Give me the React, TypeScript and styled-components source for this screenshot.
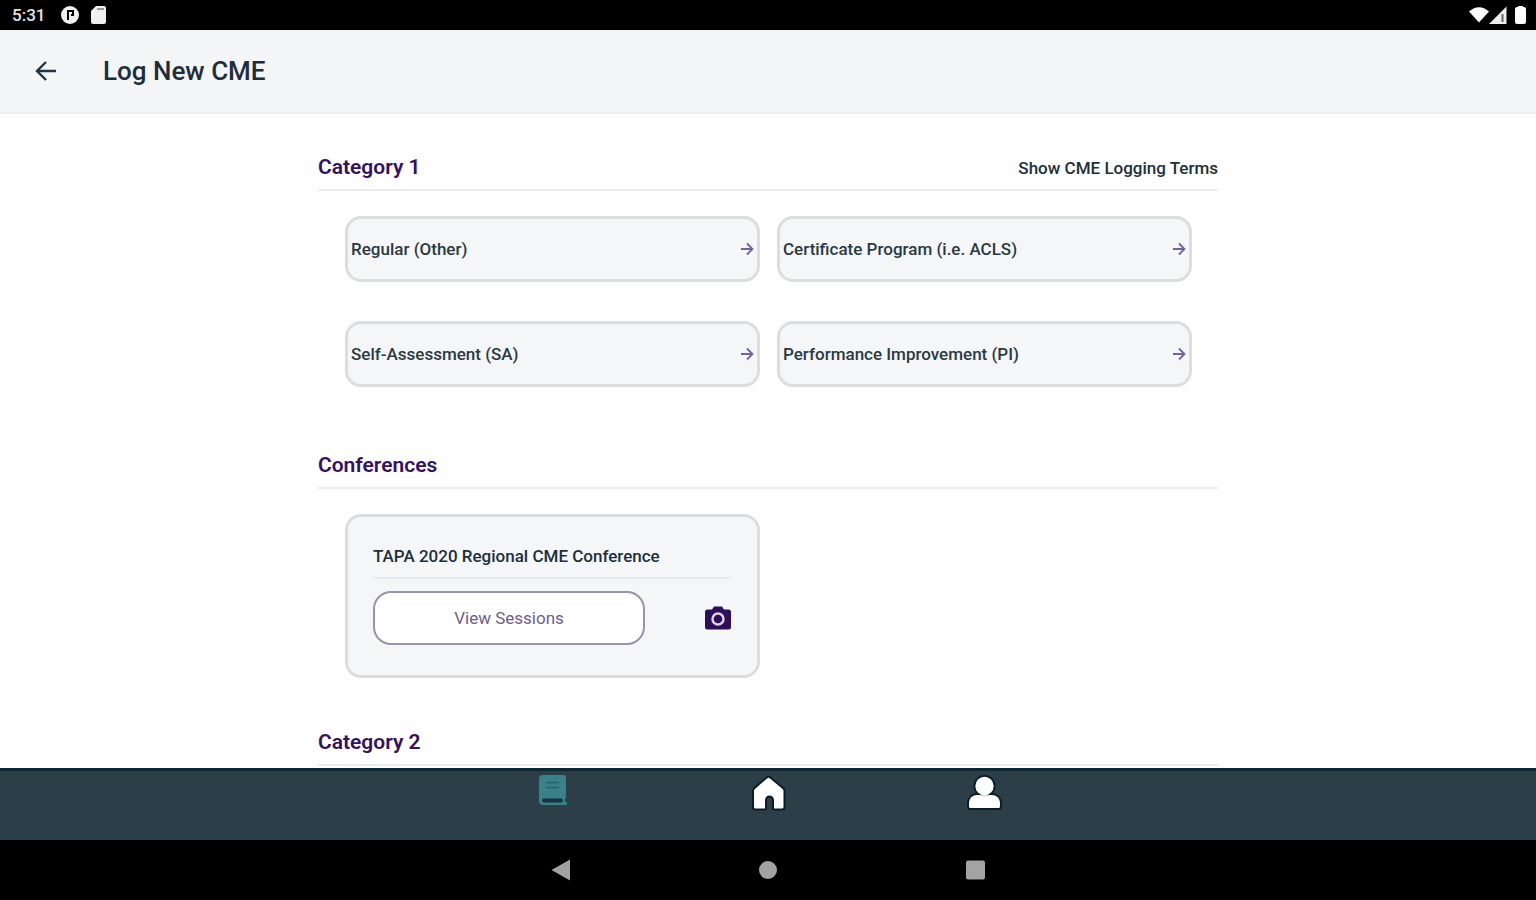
import React from "react";
import styled, { createGlobalStyle } from "styled-components";

const GlobalStyle = createGlobalStyle`
  *, *::before, *::after { box-sizing: border-box; }
  body {
    margin: 0;
    background: #fefefe;
    color: #1f333d;
    font-family: Roboto, "Liberation Sans", sans-serif;
  }
  button { font: inherit; color: inherit; cursor: pointer; }
  svg { display: block; flex: none; }
`;

const Screen = styled.div`
  display: flex;
  flex-direction: column;
  height: 100vh;
`;

const StatusBar = styled.div`
  display: flex;
  align-items: center;
  justify-content: space-between;
  flex: none;
  height: 30px;
  padding: 0 8px 0 12px;
  background: #000;
  color: #e4e4e4;
`;

const StatusGroup = styled.div`
  display: flex;
  align-items: center;
  gap: 12px;
`;

const Clock = styled.time`
  margin-right: 4px;
  font-size: 17px;
  font-weight: 500;
  line-height: 20px;
`;

const Header = styled.header`
  display: flex;
  align-items: center;
  flex: none;
  gap: 44px;
  height: 84px;
  padding: 0 32px;
  background: #f3f5f7;
  border-bottom: 2px solid #ebedee;
`;

const IconButton = styled.button`
  display: flex;
  align-items: center;
  justify-content: center;
  padding: 0;
  border: 0;
  background: none;
`;

const Title = styled.h1`
  margin: 0;
  color: #1d2d3a;
  font-size: 26px;
  font-weight: 500;
  line-height: 32px;
`;

const Content = styled.main`
  flex: 1;
  min-height: 0;
  overflow: hidden;
  padding-top: 37px;
`;

const Section = styled.section`
  max-width: 900px;
  margin: 0 auto 23px;
`;

const SectionHeader = styled.div`
  display: flex;
  justify-content: space-between;
  height: 40px;
  border-bottom: 2px solid #ebebed;
`;

const SectionTitle = styled.h2`
  margin: 0;
  color: #35115f;
  font-size: 21px;
  font-weight: 600;
  line-height: 32px;
`;

const TermsLink = styled.a`
  color: #1c303a;
  font-size: 17px;
  font-weight: 500;
  line-height: 34px;
  text-decoration: none;
`;

const CardGrid = styled.div<{ $bottom: number }>`
  display: grid;
  grid-template-columns: 1fr 1fr;
  gap: 39px 17px;
  padding: 25px 26px ${(p) => p.$bottom}px 27px;
`;

const CategoryButton = styled.button`
  display: flex;
  align-items: center;
  justify-content: space-between;
  height: 66px;
  padding: 0 2px 0 3px;
  border: 3px solid #dcdddd;
  border-radius: 16px;
  background: #f4f6f8;
  color: #2a3a42;
  font-size: 17px;
  font-weight: 500;
  text-align: left;
`;

const ConferenceCard = styled.article`
  padding: 26px 26px 26px 25px;
  height: 164px;
  border: 3px solid #dcdddd;
  border-radius: 16px;
  background: #f4f6f8;
`;

const ConferenceTitle = styled.h3`
  margin: 0 0 12px;
  padding-bottom: 8px;
  border-bottom: 2px solid #e7eaec;
  color: #1c303a;
  font-size: 17px;
  font-weight: 500;
  line-height: 26px;
`;

const ConferenceActions = styled.div`
  display: flex;
  align-items: center;
  justify-content: space-between;
`;

const SessionsButton = styled.button`
  width: 272px;
  height: 54px;
  border: 2px solid #9b92ab;
  border-radius: 18px;
  background: #fff;
  color: #6f5c8b;
  font-size: 17px;
`;

const TabBar = styled.nav`
  flex: none;
  height: 72px;
  background: #2c3e47;
  border-top: 3px solid #0d2735;
`;

const TabList = styled.div`
  display: flex;
  max-width: 648px;
  margin: 0 auto;
`;

const TabButton = styled(IconButton)`
  flex: 1;
  align-items: flex-start;
  height: 68px;
  padding-top: 2px;
`;

const SystemBar = styled.nav`
  display: flex;
  align-items: center;
  justify-content: center;
  flex: none;
  gap: 183px;
  height: 60px;
  background: #000;
`;

const SmallArrow = () => (
  <svg width="16" height="16" viewBox="0 0 16 16" fill="none" stroke="#75619a" strokeWidth="1.800" aria-hidden="true">
    <path d="M2 8H13M8 2.500 13.500 8 8 13.500" />
  </svg>
);

const categories = [
  "Regular (Other)",
  "Certificate Program (i.e. ACLS)",
  "Self-Assessment (SA)",
  "Performance Improvement (PI)",
];

export default function App() {
  return (
    <Screen>
      <GlobalStyle />
      <StatusBar>
        <StatusGroup>
          <Clock>5:31</Clock>
          <svg width="18" height="18" viewBox="0 0 18 18" aria-hidden="true">
            <circle cx="9" cy="9" r="9" fill="#f0f0f0" />
            <path d="M7 14V5h5v4h-2" fill="none" stroke="#000" strokeWidth="2" />
          </svg>
          <svg width="15" height="18" viewBox="0 0 15 18" aria-hidden="true">
            <path d="M5 0h8a2 2 0 0 1 2 2v14a2 2 0 0 1-2 2H2a2 2 0 0 1-2-2V5z" fill="#f0f0f0" />
            <path d="M6 3h7" stroke="#999" strokeWidth="2" />
          </svg>
        </StatusGroup>
        <svg width="60" height="20" viewBox="0 0 60 20" aria-hidden="true">
          <path d="M1 6.500Q11 -2 21 6.500L11 17.500z" fill="#fff" />
          <path d="M38.500 1.500V19H21z" fill="#eee" />
          <path d="M34.500 9v8" stroke="#666" strokeWidth="2" />
          <path d="M50 1h5v1h1a2 2 0 0 1 2 2v13a2 2 0 0 1-2 2h-7a2 2 0 0 1-2-2V4a2 2 0 0 1 2-2h1z" fill="#fff" />
        </svg>
      </StatusBar>

      <Header>
        <IconButton aria-label="Back">
          <svg width="27" height="26" viewBox="0 0 27 26" fill="none" stroke="#1f3540" strokeWidth="2.400">
            <path d="M24 13H6M14 4 5 13l9 9" />
          </svg>
        </IconButton>
        <Title>Log New CME</Title>
      </Header>

      <Content>
        <Section>
          <SectionHeader>
            <SectionTitle>Category 1</SectionTitle>
            <TermsLink href="#terms">Show CME Logging Terms</TermsLink>
          </SectionHeader>
          <CardGrid $bottom={39}>
            {categories.map((name) => (
              <CategoryButton key={name}>
                {name}
                <SmallArrow />
              </CategoryButton>
            ))}
          </CardGrid>
        </Section>

        <Section>
          <SectionHeader>
            <SectionTitle>Conferences</SectionTitle>
          </SectionHeader>
          <CardGrid $bottom={25}>
            <ConferenceCard>
              <ConferenceTitle>TAPA 2020 Regional CME Conference</ConferenceTitle>
              <ConferenceActions>
                <SessionsButton>View Sessions</SessionsButton>
                <IconButton aria-label="Scan session code">
                  <svg width="26" height="24" viewBox="0 0 26 24">
                    <path
                      d="M2.500 3.500H7L9 .5h8l2 3h4.500A2.500 2.500 0 0 1 26 6v15a2.500 2.500 0 0 1-2.500 2.500h-21A2.500 2.500 0 0 1 0 21V6a2.500 2.500 0 0 1 2.500-2.500z"
                      fill="#2f0f5a"
                    />
                    <circle cx="13" cy="13" r="5.500" fill="none" stroke="#d9d4e4" strokeWidth="2.500" />
                  </svg>
                </IconButton>
              </ConferenceActions>
            </ConferenceCard>
          </CardGrid>
        </Section>

        <Section>
          <SectionHeader>
            <SectionTitle>Category 2</SectionTitle>
          </SectionHeader>
        </Section>
      </Content>

      <TabBar aria-label="Main">
        <TabList>
          <TabButton aria-label="CME log" aria-current="page">
            <svg width="30" height="32" viewBox="0 0 30 32">
              <path
                d="M6 2h21a2 2 0 0 1 2 2v20a2 2 0 0 1-1 2v3a1.500 1.500 0 0 1 1 3H6a4 4 0 0 1-4-5V6a4 4 0 0 1 4-4z"
                fill="#39828a"
              />
              <path d="M9 9.500h13M9 14.500h13" stroke="#2d6871" strokeWidth="2" />
              <path d="M7 27.500h17" stroke="#17323c" strokeWidth="4" strokeLinecap="round" />
            </svg>
          </TabButton>
          <TabButton aria-label="Home">
            <svg width="38" height="38" viewBox="0 0 38 38">
              <path
                d="M21 5.500 33 15.500a3 3 0 0 1 1.500 2.500V34a1.500 1.500 0 0 1-1.500 1.500h-8V27a4.500 4.500 0 0 0-9 0v8.500H6.500A1.500 1.500 0 0 1 5 34V18a3 3 0 0 1 1.500-2.500L18 5.500a2 2 0 0 1 3 0z"
                fill="#fff"
                stroke="#0a1c26"
                strokeWidth="4"
                strokeLinejoin="round"
                paintOrder="stroke"
              />
            </svg>
          </TabButton>
          <TabButton aria-label="Profile">
            <svg width="38" height="38" viewBox="0 0 38 38">
              <g stroke="#0a1c26" strokeWidth="4" fill="#0a1c26">
                <circle cx="19.500" cy="13" r="9" />
                <path d="M4 33.500V30a8 8 0 0 1 8-8h15a8 8 0 0 1 8 8v3.500a1.500 1.500 0 0 1-1.500 1.500h-28A1.500 1.500 0 0 1 4 33.500z" />
              </g>
              <path d="M4 33.500V30a8 8 0 0 1 8-8h15a8 8 0 0 1 8 8v3.500a1.500 1.500 0 0 1-1.500 1.500h-28A1.500 1.500 0 0 1 4 33.500z" fill="#fff" />
              <circle cx="19.500" cy="13" r="9.200" fill="#fff" />
              <path d="M15 22.200q4.500 1.500 9 0" fill="none" stroke="#c9ced1" />
            </svg>
          </TabButton>
        </TabList>
      </TabBar>

      <SystemBar aria-label="System">
        <IconButton aria-label="System back">
          <svg width="24" height="24" viewBox="0 0 24 24" fill="#a3a3a3">
            <path d="M2.500 12 21 1.500v21z" />
          </svg>
        </IconButton>
        <IconButton aria-label="System home">
          <svg width="24" height="24" viewBox="0 0 24 24" fill="#a3a3a3">
            <circle cx="12" cy="12" r="9" />
          </svg>
        </IconButton>
        <IconButton aria-label="Recent apps">
          <svg width="24" height="24" viewBox="0 0 24 24" fill="#a3a3a3">
            <rect x="3" y="2.500" width="19" height="19" rx="2" />
          </svg>
        </IconButton>
      </SystemBar>
    </Screen>
  );
}
